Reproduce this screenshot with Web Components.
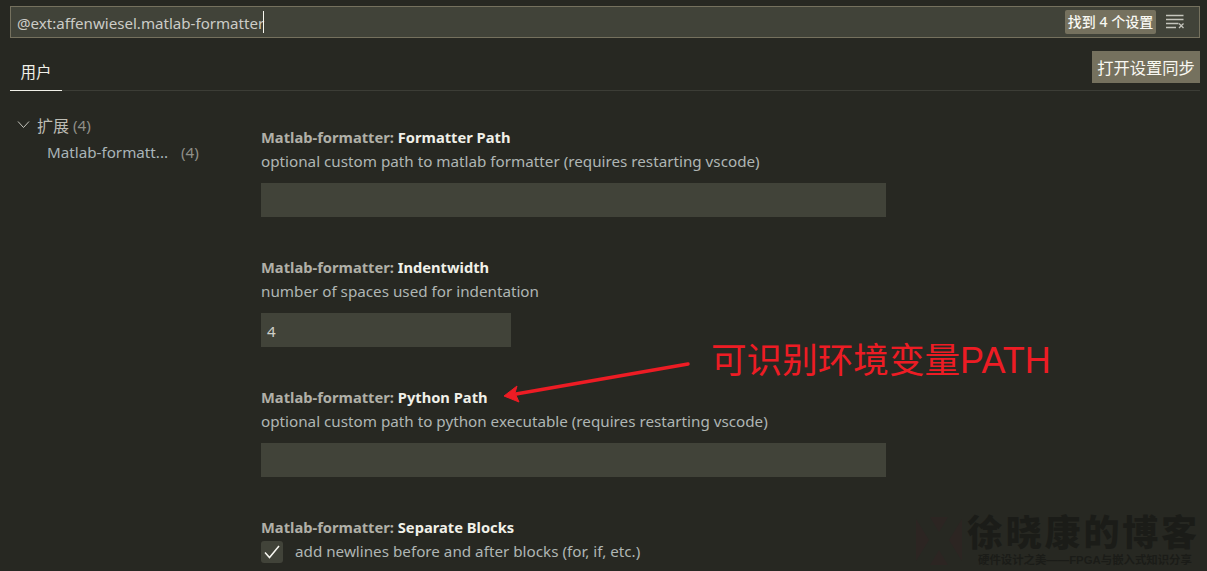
<!DOCTYPE html>
<html lang="zh"><head><meta charset="utf-8"><title>Settings</title>
<style>
html,body{margin:0;padding:0;height:571px;overflow:hidden;background:#272822;}
body{font-family:"Noto Sans","Noto Sans CJK SC",sans-serif;color:#cfd0c8;}
</style></head><body>
<settings-page></settings-page>
<template id="t-search"><style>
:host{display:flex;align-items:center;height:30px;box-sizing:content-box;background:#414339;border:1px solid #75715e;padding:0 0 0 6px;margin:6px 7px 0 10px;font-size:15.1px;color:#ccccc7;}
.v{flex:1;display:flex;align-items:center;white-space:nowrap;padding-top:2px}
.c{display:inline-block;width:1px;height:22px;background:#f8f8f0;margin-left:-1px;margin-top:-2px}
.b{background:#75715e;color:#f8f8f2;border-radius:2px;font-size:14px;font-weight:500;height:24px;line-height:24px;width:91px;text-align:center;white-space:nowrap;}
svg{margin:0 13px 0 10px;display:block}
</style><div class="v"><slot></slot><span class="c"></span></div><div class="b"><slot name="count"></slot></div>
<svg width="20" height="16" viewBox="0 0 20 16" fill="none" stroke="#c5c5bd" stroke-width="1.3"><path d="M0 1.500h17.500M0 5.500h17.500M0 9.500h12.500M0 13.500h10"/><path d="M13 9.500l4.500 4.500m0-4.500l-4.500 4.500"/></svg></template>
<template id="t-tabs"><style>
:host{display:flex;justify-content:space-between;align-items:flex-end;height:45px;margin:7px 7px 0 10px;border-bottom:1px solid #3c3d36;}
.t{width:52px;height:40px;box-sizing:border-box;border-bottom:1px solid #f0f0e8;margin-bottom:-1px;text-align:center;font-size:15.500px;line-height:42px;color:#f0f0e8;}
.s{align-self:flex-start;margin-top:6px;background:#75715e;color:#f8f8f2;width:108px;height:32px;line-height:34px;text-align:center;font-size:16.300px;white-space:nowrap;}
</style><div class="t"><slot name="tab"></slot></div><div class="s"><slot name="sync"></slot></div></template>
<template id="t-toc"><style>
:host{display:block;width:251px;flex:none;box-sizing:border-box;font-size:15.2px;padding:20px 0 0 17px;color:#bdbdb5;}
.r{display:flex;align-items:center;height:27px;white-space:nowrap}
svg{margin-right:7px;display:block}
.z{font-size:16px}
.n{color:#8f8f88}
.s{padding-left:30px;color:#a9b4b8;}
.s .n{margin-left:13px}
</style><div class="r"><svg width="13" height="9" viewBox="0 0 13 9" fill="none" stroke="#c5c5bd" stroke-width="1"><path d="M1 1.500l5.500 6 5.500-6"/></svg><span class="z"><slot name="head"></slot></span>&nbsp;<span class="n">(4)</span></div>
<div class="r s"><span><slot name="sub"></slot></span><span class="n">(4)</span></div></template>
<template id="t-setting"><style>
:host{display:block;height:130px;box-sizing:border-box;padding-top:34px;font-size:15.22px;line-height:24px;width:900px;}
.h{font-weight:700;font-size:14.7px;color:#f0f0e8;white-space:nowrap;height:24px}
.h span{color:#b0b0a8}
.d{color:#afb6b4;white-space:nowrap;height:24px}
.g{display:block;height:10px}
</style><div class="h"><span>Matlab-formatter: </span><slot name="title"></slot></div><div class="d"><slot name="desc"></slot></div><span class="g"></span><slot></slot></template>
<template id="t-input"><style>
:host{display:block;height:34px;width:625px;background:#414339;color:#cfd0c8;font-size:15.2px;line-height:36px;padding-left:6px;box-sizing:border-box;}
:host([short]){width:250px}
</style><slot></slot></template>
<template id="t-check"><style>
:host{display:flex;align-items:center;height:24px;color:#afb6b4;white-space:nowrap;}
.b{width:22px;height:22px;border-radius:3px;background:#414339;margin:2px 12px 0 0;display:flex;align-items:center;justify-content:center;}
</style><span class="b"><svg width="18" height="16" viewBox="0 0 18 16" fill="none" stroke="#f8f8f2" stroke-width="1.5"><path d="M2 8.500l4.500 5L16 2"/></svg></span><slot></slot></template>
<template id="t-note"><style>
:host{position:absolute;left:0;top:0;width:1207px;height:571px;pointer-events:none;overflow:hidden;display:block}
.a{position:absolute;left:711px;top:336px;font-size:35.6px;font-weight:400;line-height:44px;color:#ed1c24;white-space:nowrap;font-family:"Noto Sans CJK SC",sans-serif;}
svg{position:absolute;left:0;top:0}
.w{position:absolute;left:967px;top:513.5px;font:900 36px/40px "Liberation Sans","Noto Sans CJK SC",sans-serif;color:#1b1c18;letter-spacing:2.8px;white-space:nowrap;}
.w2{position:absolute;left:978px;top:553px;font:700 11.400px/14px "Liberation Sans","Noto Sans CJK SC",sans-serif;color:#1b1c18;white-space:nowrap;}
</style><svg width="1207" height="571" viewBox="0 0 1207 571">
<path d="M688 364L516 394" stroke="#ed1c24" stroke-width="3.500" stroke-linecap="round" fill="none"/>
<path d="M504 396L517 386L515 393L519 402Z" fill="#ed1c24" stroke="#ed1c24" stroke-linejoin="round"/>
<path d="M916 519l13 21-13 21zM962 519v42l-13-21zM930 517h18l-9 15zM930 565h18l-9-15z" fill="#2c2522"/>
</svg>
<div class="a"><slot name="a"></slot></div><div class="w"><slot name="w"></slot></div><div class="w2"><slot name="w2"></slot></div></template>
<template id="t-page"><style>
:host{display:block;width:1207px;height:571px;overflow:hidden;}
.m{display:flex;}
i{font:400 36px/44px "Liberation Sans",sans-serif}
</style><search-box>@ext:affenwiesel.matlab-formatter<span slot="count">找到 4 个设置</span></search-box>
<tabs-bar><span slot="tab">用户</span><span slot="sync">打开设置同步</span></tabs-bar>
<div class="m"><toc-tree><span slot="head">扩展</span><span slot="sub">Matlab-formatt...</span></toc-tree>
<div style="margin-left:10px"><setting-item><span slot="title">Formatter Path</span><span slot="desc">optional custom path to matlab formatter (requires restarting vscode)</span><text-field></text-field></setting-item>
<setting-item><span slot="title">Indentwidth</span><span slot="desc">number of spaces used for indentation</span><text-field short>4</text-field></setting-item>
<setting-item><span slot="title">Python Path</span><span slot="desc">optional custom path to python executable (requires restarting vscode)</span><text-field></text-field></setting-item>
<setting-item><span slot="title">Separate Blocks</span><check-row slot="desc">add newlines before and after blocks (for, if, etc.)</check-row></setting-item></div></div>
<note-layer><span slot="a">可识别环境变量<i>PATH</i></span><span slot="w">徐晓康的博客</span><span slot="w2">硬件设计之美——FPGA与嵌入式知识分享</span></note-layer></template>
<script>
const defs={'search-box':'t-search','tabs-bar':'t-tabs','toc-tree':'t-toc','setting-item':'t-setting','text-field':'t-input','check-row':'t-check','note-layer':'t-note','settings-page':'t-page'};
for(const [n,t] of Object.entries(defs)){customElements.define(n,class extends HTMLElement{constructor(){super();this.attachShadow({mode:'open'}).appendChild(document.getElementById(t).content.cloneNode(true));}});}
</script></body></html>
